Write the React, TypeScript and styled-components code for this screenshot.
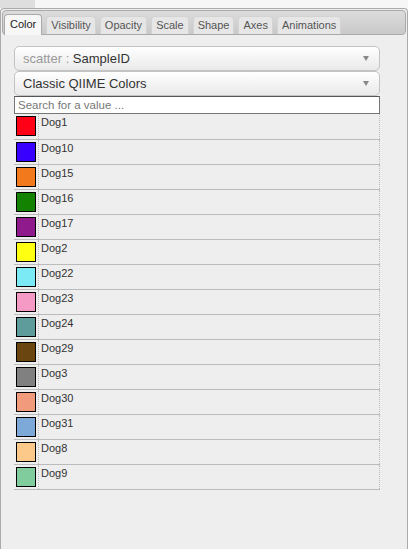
import React from 'react';
import styled, { createGlobalStyle } from 'styled-components';

const categories: { name: string; color: string }[] = [
  { name: 'Dog1', color: '#ff0016' },
  { name: 'Dog10', color: '#3700ff' },
  { name: 'Dog15', color: '#f27a1d' },
  { name: 'Dog16', color: '#138200' },
  { name: 'Dog17', color: '#8f1a8b' },
  { name: 'Dog2', color: '#ffff12' },
  { name: 'Dog22', color: '#7ceaf4' },
  { name: 'Dog23', color: '#f49ac4' },
  { name: 'Dog24', color: '#5d9c9a' },
  { name: 'Dog29', color: '#6b4510' },
  { name: 'Dog3', color: '#808080' },
  { name: 'Dog30', color: '#f29a7c' },
  { name: 'Dog31', color: '#7da9d8' },
  { name: 'Dog8', color: '#fcc98a' },
  { name: 'Dog9', color: '#80cc9c' },
];

const tabs = ['Color', 'Visibility', 'Opacity', 'Scale', 'Shape', 'Axes', 'Animations'];

export default function App() {
  return (
    <>
      <GlobalStyle />
      <TopStrip>
        <TopStripLeft />
      </TopStrip>
      <Panel>
        <TabBar>
          {tabs.map((t, i) => (
            <Tab key={t} $active={i === 0}>{t}</Tab>
          ))}
        </TabBar>
        <Content>
          <Dropdown>
            <span>
              <Muted>scatter</Muted>
              <Muted> :</Muted> SampleID
            </span>
            <Arrow />
          </Dropdown>
          <Dropdown>
            <span>Classic QIIME Colors</span>
            <Arrow />
          </Dropdown>
          <Search placeholder="Search for a value ..." />
          <Table>
            <tbody>
              {categories.map((c) => (
                <Row key={c.name}>
                  <SwatchCell>
                    <Swatch $color={c.color} />
                  </SwatchCell>
                  <NameCell>{c.name}</NameCell>
                </Row>
              ))}
            </tbody>
          </Table>
        </Content>
      </Panel>
    </>
  );
}

const GlobalStyle = createGlobalStyle`
  body {
    margin: 0;
    background: #f6f6f6;
    font-family: "Liberation Sans", Arial, sans-serif;
    overflow: hidden;
  }
`

const TopStrip = styled.div`
  display: flex;
  height: 8px;
`

const TopStripLeft = styled.div`
  width: 35px;
  background: #dedede;
`

const Panel = styled.div`
  height: 541px;
  box-sizing: border-box;
  border: 1px solid #aaa;
  border-bottom: none;
  border-radius: 4px 4px 0 0;
  background: #eee;
  padding: 1px 1px 0 1px;
`

const TabBar = styled.ul`
  display: flex;
  align-items: flex-end;
  gap: 4px;
  box-sizing: border-box;
  margin: 0;
  padding: 0 1px;
  height: 25px;
  border: 1px solid #aaa;
  border-radius: 4px;
  background: linear-gradient(#dcdcdc, #c9c9c9);
  list-style: none;
`

const Tab = styled.li<{ $active?: boolean }>`
  font-size: 11px;
  line-height: 13px;
  padding: ${(p) => (p.$active ? '3px 5px 4px' : '2px 4px 2px')};
  margin-bottom: ${(p) => (p.$active ? '-1px' : '0')};
  border: 1px solid ${(p) => (p.$active ? '#aaa' : '#d3d3d3')};
  border-bottom: none;
  border-radius: 4px 4px 0 0;
  background: ${(p) => (p.$active ? '#f7f7f7' : '#e6e6e6')};
  color: ${(p) => (p.$active ? '#212121' : '#555')};
`

const Content = styled.div`
  display: flex;
  flex-direction: column;
  padding: 11px 0 0 12px;
  width: 366px;
`

const Dropdown = styled.div`
  display: flex;
  align-items: center;
  justify-content: space-between;
  box-sizing: border-box;
  height: 25px;
  padding: 0 10px 0 8px;
  border: 1px solid #c3c3c3;
  border-radius: 5px;
  background: linear-gradient(#fff, #f4f4f4 50%, #e9e9e9);
  font-size: 13px;
  color: #333;
`

const Muted = styled.span`
  color: #999;
`

const Arrow = styled.span`
  width: 0;
  height: 0;
  border-left: 3.5px solid transparent;
  border-right: 3.5px solid transparent;
  border-top: 5px solid #888;
`

const Search = styled.input`
  box-sizing: border-box;
  height: 18px;
  margin: 0;
  padding: 0 3px;
  border: 1px solid #767676;
  border-top-color: #555;
  font-family: "Liberation Sans", Arial, sans-serif;
  font-size: 11.5px;
  background: #fff;
  outline: none;
  &::placeholder {
    color: #777;
  }
`

const Table = styled.table`
  border-collapse: collapse;
  width: 100%;
  border-right: 1px dotted #bbb;
`

const Row = styled.tr`
  height: 25px;
  border-bottom: 1px solid #bbb;
`

const SwatchCell = styled.td`
  width: 20px;
  padding: 2px 2px 0 2px;
  vertical-align: top;
  border-right: 1px dotted #bbb;
`

const Swatch = styled.div<{ $color: string }>`
  width: 18px;
  height: 18px;
  border: 1px solid #000;
  background: ${(p) => p.$color};
`

const NameCell = styled.td`
  vertical-align: top;
  padding: 2px 0 0 2px;
  font-size: 11px;
  color: #333;
`
